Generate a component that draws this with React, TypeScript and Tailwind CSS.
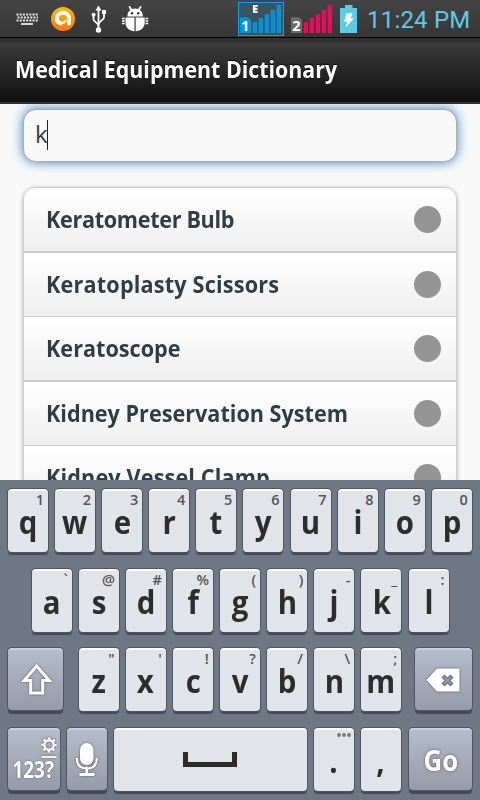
import React from "react";
import clsx from "clsx";

interface KeyData {
  label: string;
  hint?: string;
}

const row1: KeyData[] = [
  { label: "q", hint: "1" },
  { label: "w", hint: "2" },
  { label: "e", hint: "3" },
  { label: "r", hint: "4" },
  { label: "t", hint: "5" },
  { label: "y", hint: "6" },
  { label: "u", hint: "7" },
  { label: "i", hint: "8" },
  { label: "o", hint: "9" },
  { label: "p", hint: "0" },
];

const row2: KeyData[] = [
  { label: "a", hint: "`" },
  { label: "s", hint: "@" },
  { label: "d", hint: "#" },
  { label: "f", hint: "%" },
  { label: "g", hint: "(" },
  { label: "h", hint: ")" },
  { label: "j", hint: "-" },
  { label: "k", hint: "_" },
  { label: "l", hint: ":" },
];

const row3: KeyData[] = [
  { label: "z", hint: '"' },
  { label: "x", hint: "'" },
  { label: "c", hint: "!" },
  { label: "v", hint: "?" },
  { label: "b", hint: "/" },
  { label: "n", hint: "\\" },
  { label: "m", hint: ";" },
];

const results = [
  { name: "Keratometer Bulb", className: "h-16 border-t", tracking: "tracking-[-0.35px]" },
  { name: "Keratoplasty Scissors", className: "h-[65px] border-t-2", tracking: "tracking-[0.2px]" },
  { name: "Keratoscope", className: "h-16 border-t", tracking: "tracking-normal" },
  { name: "Kidney Preservation System", className: "h-[65px] border-t-2", tracking: "tracking-normal" },
  { name: "Kidney Vessel Clamp", className: "h-16 border-t", tracking: "tracking-[0.15px]" },
];

const NotificationIcons = () => (
  <svg width="160" height="37" viewBox="0 0 160 37" fill="none">
    {/* keyboard */}
    <g stroke="#e8e8e8" strokeWidth="1.8">
      <path d="M16.5 14.5H38" strokeDasharray="2 1.2" />
      <path d="M17.5 17.5H38" strokeDasharray="2 1.2" />
      <path d="M16.5 20.5H38" strokeDasharray="2 1.2" />
      <path d="M21 24H33" />
    </g>
    {/* antivirus */}
    <defs>
      <linearGradient id="orange" x1="0" y1="0" x2="0" y2="1">
        <stop offset="0" stopColor="#fdb913" />
        <stop offset="1" stopColor="#fb7a08" />
      </linearGradient>
    </defs>
    <circle cx="63" cy="19" r="12" fill="url(#orange)" />
    <path
      d="M60.4 23.400C58.200 22.600 56.800 20.600 56.800 18.400c0-3.200 2.700-5.700 6.100-5.700s6 2.500 6 5.800v5"
      stroke="#fff"
      strokeWidth="4"
      strokeLinecap="round"
    />
    <path d="M60.8 22.600c1.800.6 3.700-.1 4.400-1.800" stroke="#fff" strokeWidth="2.2" strokeLinecap="round" />
    {/* usb */}
    <g stroke="#fff" strokeWidth="1.8">
      <path d="M98.5 9v20" />
      <path d="M93.5 15v4.200c0 2.800 5 3.600 5 6.800" />
      <path d="M104 13v4.600c0 2.600-5.500 3.400-5.500 6.800" />
    </g>
    <path d="M98.500 5.500l3 5h-6z" fill="#fff" />
    <circle cx="98.500" cy="30" r="2.700" fill="#fff" />
    <circle cx="93.600" cy="14.700" r="2" fill="#fff" />
    <path d="M102 10h4v4h-4z" fill="#fff" />
    {/* debug bug */}
    <path d="M127.400 16.400c0-4.700 3-7.800 7.700-7.800s7.700 3.100 7.700 7.800z" fill="#fff" />
    <path d="M129.600 7l2.200 3.400M140.600 7l-2.200 3.400" stroke="#fff" strokeWidth="1.800" strokeLinecap="round" />
    <circle cx="132" cy="13.200" r="1.200" fill="#333" />
    <circle cx="138.200" cy="13.200" r="1.200" fill="#333" />
    <path d="M125.500 17.600h9v13.600c-5.200-.2-9-3.700-9-8.400zM135.700 17.600h9v5.200c0 4.700-3.800 8.200-9 8.400z" fill="#fff" />
    <path
      d="M122 18.500h2.700M122 21h2.700M122 23.500h2.700M145.500 18.500h2.700M145.500 21h2.700M145.500 23.500h2.700"
      stroke="#fff"
      strokeWidth="1.600"
    />
  </svg>
);

const SignalIcons = () => (
  <svg width="120" height="37" viewBox="238 0 120 37" fontFamily="Open Sans, sans-serif">
    <rect x="238.500" y="2.500" width="45" height="33" fill="#3b535c" stroke="#0f9df0" />
    <text x="252.300" y="13.300" fontSize="10.500" fontWeight="800" fill="#fff">
      E
    </text>
    <path d="M240 17.300h8l3 3v12.700h-11z" fill="#0a8fd4" />
    <text x="241" y="30.500" fontSize="14.500" fontWeight="700" fill="#fff">
      1
    </text>
    <path
      d="M252.700 22h4.300v11h-4.300zM258.700 18h4.300v15h-4.300zM264.700 14h4.300v19h-4.300zM270.700 10h4.300v23h-4.300zM276.700 5h4.300v28h-4.300z"
      fill="#0a8fd4"
    />
    <path d="M291 17.300h8l3 3v12.700h-11z" fill="#6b6b6b" />
    <text x="292.200" y="30.500" fontSize="14.500" fontWeight="700" fill="#fff">
      2
    </text>
    <path
      d="M303.700 22h4.300v11h-4.300zM309.700 18h4.300v15h-4.300zM315.700 14h4.300v19h-4.300zM321.700 10h4.300v23h-4.300zM327.700 5h4.300v28h-4.300z"
      fill="#f4065e"
    />
    <path d="M345 5h7.500v3h4.500v25h-17v-25h5z" fill="#5ecbe4" />
    <path d="M346.600 13.300h6l-2 5h3.300l-8.600 9.400 2-6h-3.300z" fill="#fff" />
  </svg>
);

const StatusBar = () => (
  <div className="flex h-[38px] shrink-0 items-start border-b border-black bg-linear-to-b from-[#454545] to-[#363636]">
    <NotificationIcons />
    <div className="ml-[78px]">
      <SignalIcons />
    </div>
    <span className="ml-[9px] mt-[5px] font-[Roboto] text-[24px] leading-[30px] tracking-[0.2px] whitespace-nowrap text-[#5ecbe4]">
      11:24 PM
    </span>
  </div>
);

const Key: React.FC<KeyData> = ({ label, hint }) => (
  <div className="relative flex h-[63px] w-[40px] shrink-0 justify-center rounded-[4px] border-t-2 border-white bg-[#e1e4e9] shadow-[0_0_0_1px_#50565f,0_3px_1px_#444b54]">
    <span className="mt-[18px] block scale-x-92 text-[32px] leading-[26px] font-bold text-[#2d2d2d]">
      {label}
    </span>
    {hint && (
      <span className="absolute top-[1px] right-[4px] text-[14.5px] leading-[16px] font-semibold text-[#555]">
        {hint}
      </span>
    )}
  </div>
);

const DarkKey = ({ className, children }: { className?: string; children: React.ReactNode }) => (
  <div
    className={clsx(
      "flex h-[62px] shrink-0 items-center justify-center rounded-[4px] border-t-2 border-[#c8cfde] bg-linear-to-b from-[#b4bbca] to-[#959ba7] text-white shadow-[0_0_0_1px_#50565f,0_4px_1px_#444b54]",
      className
    )}
  >
    {children}
  </div>
);

const Keyboard = () => (
  <div className="flex h-80 flex-col gap-[17px] bg-[#6f7684] px-2 pt-[9px]">
    <div className="flex h-[63px] gap-[7.1px]">
      {row1.map((key) => (
        <Key key={key.label} {...key} />
      ))}
    </div>
    <div className="flex h-[63px] gap-[7.1px] pl-[23.8px]">
      {row2.map((key) => (
        <Key key={key.label} {...key} />
      ))}
    </div>
    <div className="-mt-px flex h-[63px] gap-[7.1px]">
      <DarkKey className="mr-[8.500px] w-[55px]">
        <svg width="36" height="36" viewBox="0 0 36 36" fill="none" className="drop-shadow-[0_0_1px_#555]">
          <path d="M18.700 4L6.200 18.500h6.500v12.500h12v-12.500h6.500z" stroke="#fff" strokeWidth="3" />
        </svg>
      </DarkKey>
      {row3.map((key) => (
        <Key key={key.label} {...key} />
      ))}
      <DarkKey className="ml-[6.500px] w-[57px]">
        <svg width="34" height="24" viewBox="0 0 34 24" fill="none" className="mr-px drop-shadow-[0_0_1px_#555]">
          <path d="M11 .5h21.500q1 0 1 1v21q0 1-1 1h-21.500l-10.500-11.500z" fill="#fff" />
          <path d="M17 8l9 9M26 8l-9 9" stroke="#6d7380" strokeWidth="4.400" />
          <path d="M17.800 8.800l7.400 7.400M25.200 8.800l-7.400 7.400" stroke="#969ca9" strokeWidth="1.800" />
        </svg>
      </DarkKey>
    </div>
    <div className="flex h-[63px] gap-[7px]">
      <DarkKey className="w-[52px] flex-col">
        <svg width="16" height="22" viewBox="0 0 16 22" fill="none" className="-mt-[2px] mr-[3px] ml-auto drop-shadow-[0_0_1px_#555]">
          <circle cx="8" cy="8" r="4.700" stroke="#fff" strokeWidth="2.400" />
          <circle cx="8" cy="8" r="6.700" stroke="#fff" strokeWidth="2" strokeDasharray="2.600 2.662" strokeDashoffset="1.300" />
          <path d="M.5 20h15" stroke="#fff" strokeWidth="1.800" />
        </svg>
        <span className="-mt-[3px] mr-px block scale-x-82 text-[23px] leading-[26px] font-bold [text-shadow:0_0_2px_#555]">
          123?
        </span>
      </DarkKey>
      <DarkKey className="w-10">
        <svg width="24" height="36" viewBox="0 0 24 36" fill="none" className="drop-shadow-[0_0_1px_#555]">
          <rect x="5" y="1" width="13.500" height="22" rx="6.700" fill="#fff" />
          <path d="M1.800 16c0 7 4 10.500 10 10.500s10-3.500 10-10.500" stroke="#fff" strokeWidth="2" />
          <path d="M11.800 26v6M5.500 32.500h13" stroke="#fff" strokeWidth="2.800" strokeLinecap="round" />
        </svg>
      </DarkKey>
      <div className="flex h-[63px] w-[193px] items-center justify-center rounded-[4px] border-t-2 border-white bg-[#e1e4e9] shadow-[0_0_0_1px_#50565f,0_3px_1px_#444b54]">
        <svg width="54" height="15" viewBox="0 0 54 15" fill="none" className="mr-[2px] mb-[3px]">
          <path d="M2.500 0v12.500h49v-12.500" stroke="#2e2b29" strokeWidth="5" />
        </svg>
      </div>
      <div className="relative">
        <Key label="." />
        <svg width="14" height="4" viewBox="0 0 14 4" fill="#777" className="absolute top-[5px] right-[3px]">
          <circle cx="2" cy="2" r="1.900" />
          <circle cx="7" cy="2" r="1.900" />
          <circle cx="12" cy="2" r="1.900" />
        </svg>
      </div>
      <Key label="," />
      <DarkKey className="ml-px w-[63px]">
        <span className="-mt-px block scale-x-92 text-[28px] leading-[36px] font-bold [text-shadow:0_0_3px_#555]">
          Go
        </span>
      </DarkKey>
    </div>
  </div>
);

const App: React.FC = () => {
  return (
    <div className="flex h-[800px] w-[480px] flex-col overflow-hidden bg-[#f9f9f9] font-['Open_Sans',sans-serif]">
      <StatusBar />
      <header className="relative z-10 flex h-[66px] shrink-0 items-center border-t-[5px] border-b-2 border-t-[#303030] border-b-[#333] bg-linear-to-b from-[#3c3c3c] to-[#111] pl-[15px]">
        <h1 className="-mt-[6px] origin-left scale-x-95 text-[22.500px] leading-[32px] font-bold whitespace-nowrap text-white [text-shadow:0_-1px_1px_#000]">
          Medical Equipment Dictionary
        </h1>
      </header>

      <main className="h-[376px] shrink-0 overflow-hidden pt-[5px] pr-[23px] pl-[23px]">
        <div className="flex h-[53px] items-center rounded-[13px] border border-[#aaa] bg-[#f9f9f9] pl-[11px] shadow-[0_0_12px_#387bbe]">
          <span className="-mt-[3px] text-[24px] leading-[32px] tracking-[-0.8px] text-[#3d3d3d]">k</span>
          <span className="-mt-[2px] h-[30px] w-px bg-[#222]" />
        </div>

        <ul className="mt-[25px] overflow-hidden rounded-t-[13px] border-x border-[#ccc] shadow-[0_1px_4px_rgba(0,0,0,0.3)]">
          {results.map((item) => (
            <li
              key={item.name}
              className={clsx(
                "flex items-center justify-between border-[#ccc] bg-linear-to-b from-white to-[#efefef] pr-[15px] pl-[22px] first:rounded-t-[12px]",
                item.className
              )}
            >
              <span
                className={clsx(
                  "-mt-[2px] origin-left scale-x-94 text-[23px] leading-[32px] font-bold whitespace-nowrap text-[#2f3e46] [text-shadow:0_1px_0_#fff]",
                  item.tracking
                )}
              >
                {item.name}
              </span>
              <span className="size-[27px] rounded-full bg-[#949494]" />
            </li>
          ))}
        </ul>
      </main>

      <Keyboard />
    </div>
  );
};

export default App;
